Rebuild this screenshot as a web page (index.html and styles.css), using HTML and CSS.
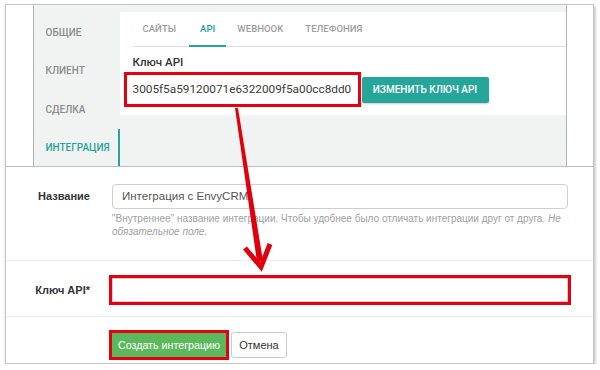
FILE: index.html
```html
<!DOCTYPE html>
<html lang="ru">
<head>
  <meta charset="UTF-8" />
  <title>Интеграция с EnvyCRM</title>
  <link rel="stylesheet" href="styles.css">
</head>
<body>
  <div class="card">
    <div class="shot-row">
      <div class="shot-gap"></div>
      <div class="shot">
        <ul class="nav">
          <li>Общие</li>
          <li>Клиент</li>
          <li>Сделка</li>
          <li class="active">Интеграция</li>
        </ul>
        <div class="panel">
          <div class="tabs">
            <span class="tab">Сайты</span>
            <span class="tab active">API</span>
            <span class="tab">Webhook</span>
            <span class="tab">Телефония</span>
          </div>
          <div class="key-label">Ключ API</div>
          <div class="key-row">
            <div class="key-box">3005f5a59120071e6322009f5a00cc8dd0</div>
            <button class="btn-teal">Изменить ключ API</button>
          </div>
        </div>
      </div>
      <div class="shot-gap"></div>
    </div>

    <div class="form-row first">
      <label class="form-label">Название</label>
      <div class="form-field">
        <div class="input">Интеграция с EnvyCRM</div>
        <p class="help">"Внутреннее" название интеграции. Чтобы удобнее было отличать интеграции друг от друга. <em>Не обязательное поле.</em></p>
      </div>
    </div>

    <div class="form-row second">
      <label class="form-label">Ключ API*</label>
      <div class="form-field">
        <div class="input marked"></div>
      </div>
    </div>

    <div class="form-row actions">
      <div></div>
      <div class="buttons">
        <button class="btn-green marked">Создать интеграцию</button>
        <button class="btn-cancel">Отмена</button>
      </div>
    </div>
  </div>

  <svg class="arrow" width="600" height="370" viewBox="0 0 600 370">
    <polygon points="235,108 238,108 263,261 257,262" fill="#e0000b" />
    <polyline points="245,248 261,267 270,244" fill="none" stroke="#e0000b" stroke-width="5" stroke-linejoin="miter" />
  </svg>
</body>
</html>
```

FILE: styles.css
```css
body {
  margin: 0;
  background: #fff;
  font-family: "Liberation Sans", Arial, sans-serif;
  color: #333;
}
.card {
  margin: 4px 0 0 5px;
  width: 589px;
  height: 360px;
  box-sizing: border-box;
  border: 1px solid #c6c6c6;
  box-shadow: 1px 2px 3px rgba(0, 0, 0, 0.3);
  background: #fff;
}

/* screenshot of settings */
.shot-row {
  display: flex;
  height: 162px;
  box-sizing: border-box;
  border-bottom: 1px solid #bdbdbd;
}
.shot-gap {
  flex: 1;
}
.shot {
  width: 534px;
  box-sizing: border-box;
  border-left: 1px solid #b0b0b0;
  border-right: 1px solid #b0b0b0;
  background: #f1f2f2;
  padding-top: 7px;
  display: flex;
  align-items: flex-start;
  overflow: hidden;
  font-family: Roboto, "Noto Sans", sans-serif;
}
.nav {
  list-style: none;
  margin: 0;
  padding: 2px 0 0;
  width: 86px;
  flex-shrink: 0;
}
.nav li {
  height: 38.3px;
  line-height: 38px;
  padding-left: 12px;
  font-size: 10px;
  font-weight: 500;
  text-transform: uppercase;
  color: #8c8c8c;
  box-sizing: border-box;
}
.nav li.active {
  color: #26a69a;
  border-right: 2px solid #26a69a;
}
.panel {
  flex: 1;
  height: 103px;
  background: #fff;
  padding-left: 13px;
}
.tabs {
  display: flex;
  height: 34px;
  border-bottom: 1px solid #dedede;
}
.tab {
  padding: 0 11px;
  line-height: 33px;
  font-size: 9.6px;
  font-weight: 500;
  text-transform: uppercase;
  color: #9e9e9e;
}
.tab:first-child {
  padding-left: 10px;
  margin-right: 2px;
}
.tab.active {
  color: #26a69a;
  border-bottom: 2px solid #26a69a;
  margin-bottom: -1px;
}
.key-label {
  margin-top: 8px;
  line-height: 14px;
  font-size: 11.5px;
  font-weight: 500;
  color: #333;
}
.key-row {
  display: flex;
  align-items: center;
  margin-top: 3px;
}
.key-box {
  margin-left: -9px;
  width: 237px;
  height: 35px;
  box-sizing: border-box;
  border: 3px solid #e3000f;
  padding-left: 6px;
  line-height: 29px;
  font-size: 11.8px;
  color: #3a3a3a;
  white-space: nowrap;
  overflow: hidden;
}
.btn-teal {
  margin-left: 1px;
  width: 127px;
  height: 26px;
  border: none;
  border-radius: 2px;
  background: #26a69a;
  color: #fff;
  font-family: Roboto, "Noto Sans", sans-serif;
  font-size: 10px;
  font-weight: 500;
  text-transform: uppercase;
  box-shadow: 0 1px 2px rgba(0, 0, 0, 0.2);
}

/* form */
.form-row {
  display: grid;
  grid-template-columns: 94px 456px;
  column-gap: 12px;
  border-bottom: 1px solid #ececec;
}
.form-row.first {
  padding: 17px 0 22px;
}
.form-row.second {
  padding: 17px 0 13px;
}
.form-row.actions {
  padding-top: 15px;
  border-bottom: none;
}
.form-label {
  text-align: right;
  padding-right: 10px;
  font-size: 11px;
  font-weight: bold;
  color: #333;
  line-height: 25px;
}
.input {
  height: 25px;
  box-sizing: border-box;
  border: 1px solid #cfcfcf;
  border-radius: 4px;
  padding-left: 9px;
  font-size: 11.5px;
  line-height: 23px;
  color: #555;
}
.input.marked {
  height: 24px;
  border-radius: 0;
}
.marked {
  outline: 3px solid #e3000f;
}
.help {
  margin: 3px 0 0;
  font-size: 10px;
  line-height: 13px;
  color: #a0a0a0;
}
.buttons {
  display: flex;
  align-items: center;
  gap: 5px;
}
.btn-green {
  height: 24px;
  width: 114px;
  border: none;
  background: #5cb85c;
  color: #fff;
  font-family: "Liberation Sans", Arial, sans-serif;
  font-size: 10.7px;
  padding: 0;
}
.btn-cancel {
  height: 26px;
  width: 56px;
  border: 1px solid #ccc;
  border-radius: 3px;
  background: #fff;
  color: #333;
  font-family: "Liberation Sans", Arial, sans-serif;
  font-size: 11px;
  padding: 0;
}
.arrow {
  position: absolute;
  left: 0;
  top: 0;
  pointer-events: none;
}
```
